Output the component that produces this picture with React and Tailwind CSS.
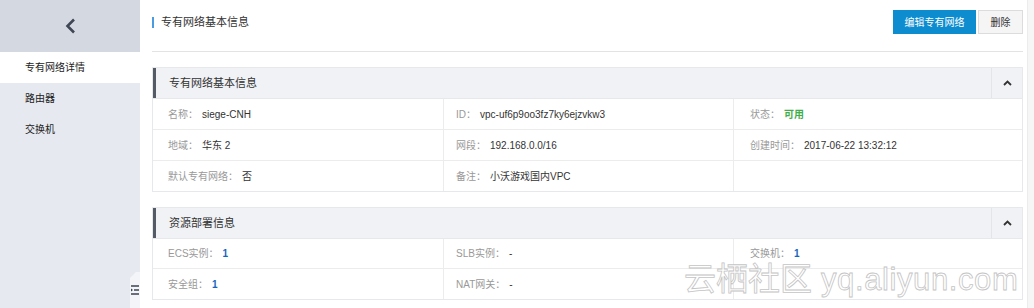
const font = { fontFamily: '"Liberation Sans", "Noto Sans CJK SC", sans-serif' };

function Field({ label, value, valueClass = "text-[#333]", className = "" }) {
    return (
        <div className={"flex items-center h-full text-[10px] " + className}>
            <span className="text-[#999]">{label}</span>
            <span className={"ml-1 " + valueClass}>{value}</span>
        </div>
    );
}

function Panel({ title, rows, rowHeights }) {
    return (
        <div className="border border-[#e6e8eb] bg-white">
            <div className="flex h-[31px] bg-[#f0f2f6] border-b border-[#e6e8eb]">
                <div className="w-[3px] bg-[#545b66]" />
                <div className="flex-1 flex items-center pl-[13px] text-[11px] text-[#333]">{title}</div>
                <div className="w-[31px] flex items-center justify-center border-l border-[#e3e5e9]">
                    <svg width="9" height="6" viewBox="0 0 9 6">
                        <path d="M1 5 L4.5 1.5 L8 5" fill="none" stroke="#333" strokeWidth="1.8" />
                    </svg>
                </div>
            </div>
            {rows.map((row, i) => (
                <div
                    key={i}
                    className={
                        "grid grid-cols-[291px_290px_1fr] " +
                        rowHeights[i] +
                        (i < rows.length - 1 ? " border-b border-[#ececec]" : "")
                    }
                >
                    <div className="pl-[15px] border-r border-[#ececec]">{row[0]}</div>
                    <div className="pl-[12px] border-r border-[#ececec]">{row[1]}</div>
                    <div className="pl-[16px]">{row[2]}</div>
                </div>
            ))}
        </div>
    );
}

export default function App() {
    const blue = "text-[#1565c0] font-semibold";
    return (
        <div className="relative flex h-[308px] w-[1034px] overflow-hidden bg-white" style={font}>
            {/* sidebar */}
            <div className="w-[140px] flex flex-col bg-[#e6e9ef]">
                <div className="h-[52px] bg-[#d4d9e1] flex items-center justify-center">
                    <svg width="11" height="16" viewBox="0 0 11 16">
                        <path d="M9 1.5 L2.5 8 L9 14.5" fill="none" stroke="#3f4654" strokeWidth="2.6" />
                    </svg>
                </div>
                <div className="h-[31px] bg-white flex items-center pl-[25px] text-[10px] text-[#222]">专有网络详情</div>
                <div className="h-[31px] flex items-center pl-[25px] text-[10px] text-[#222]">路由器</div>
                <div className="h-[31px] flex items-center pl-[25px] text-[10px] text-[#222]">交换机</div>
                <div className="mt-auto self-end w-[10px] h-[36px] bg-[#f4f5f8] [clip-path:polygon(0_6px,6px_0,100%_0,100%_100%,0_100%)] flex items-center justify-center">
                    <svg width="8" height="10" viewBox="0 0 8 10">
                        <path d="M0 1 H8 M3 5 H8 M0 9 H8" stroke="#3b4352" strokeWidth="1.6" />
                        <path d="M0 3.5 L2 5 L0 6.5 Z" fill="#3b4352" />
                    </svg>
                </div>
            </div>

            {/* main */}
            <div className="flex-1 pl-3 pr-1">
                <div className="h-[52px] pt-[10px] flex items-start justify-between border-b border-[#e3e3e3]">
                    <div className="h-[24px] flex items-center">
                        <div className="w-[2px] h-[11px] bg-[#4a9be0]" />
                        <span className="ml-[7px] text-[11px] text-[#333]">专有网络基本信息</span>
                    </div>
                    <div className="flex items-center gap-[2px]">
                        <button className="h-[24px] w-[83px] bg-[#0d8ccf] text-white text-[10px]">编辑专有网络</button>
                        <button className="h-[24px] w-[45px] bg-[#f5f5f5] border border-[#dcdcdc] text-[#333] text-[10px]">删除</button>
                    </div>
                </div>

                <div className="mt-[15px]">
                    <Panel
                        title="专有网络基本信息"
                        rowHeights={["h-[31px]", "h-[31px]", "h-[30px]"]}
                        rows={[
                            [
                                <Field label="名称：" value="siege-CNH" />,
                                <Field label="ID：" value="vpc-uf6p9oo3fz7ky6ejzvkw3" />,
                                <Field label="状态：" value="可用" valueClass="text-[#3fae49] font-semibold" />,
                            ],
                            [
                                <Field label="地域：" value="华东 2" />,
                                <Field label="网段：" value="192.168.0.0/16" />,
                                <Field label="创建时间：" value="2017-06-22 13:32:12" />,
                            ],
                            [
                                <Field label="默认专有网络：" value="否" />,
                                <Field label="备注：" value="小沃游戏国内VPC" />,
                                null,
                            ],
                        ]}
                    />
                </div>

                <div className="mt-[15px]">
                    <Panel
                        title="资源部署信息"
                        rowHeights={["h-[30px]", "h-[30px]"]}
                        rows={[
                            [
                                <Field label="ECS实例：" value="1" valueClass={blue} />,
                                <Field label="SLB实例：" value="-" />,
                                <Field label="交换机：" value="1" valueClass={blue} />,
                            ],
                            [
                                <Field label="安全组：" value="1" valueClass={blue} />,
                                <Field label="NAT网关：" value="-" />,
                                null,
                            ],
                        ]}
                    />
                </div>
            </div>

            {/* scrollbar track */}
            <div className="w-[7px] bg-[#f6f6f6] border-l border-[#ececec]" />

            {/* watermark */}
            <div className="absolute left-[684px] top-[263px] flex items-baseline text-white [-webkit-text-stroke:0.8px_#c4c4c4] pointer-events-none">
                <span className="text-[32px] leading-none">云栖社区</span>
                <span className="ml-[9px] text-[31px] leading-none tracking-[0.6px]">yq.aliyun.com</span>
            </div>
        </div>
    );
}
